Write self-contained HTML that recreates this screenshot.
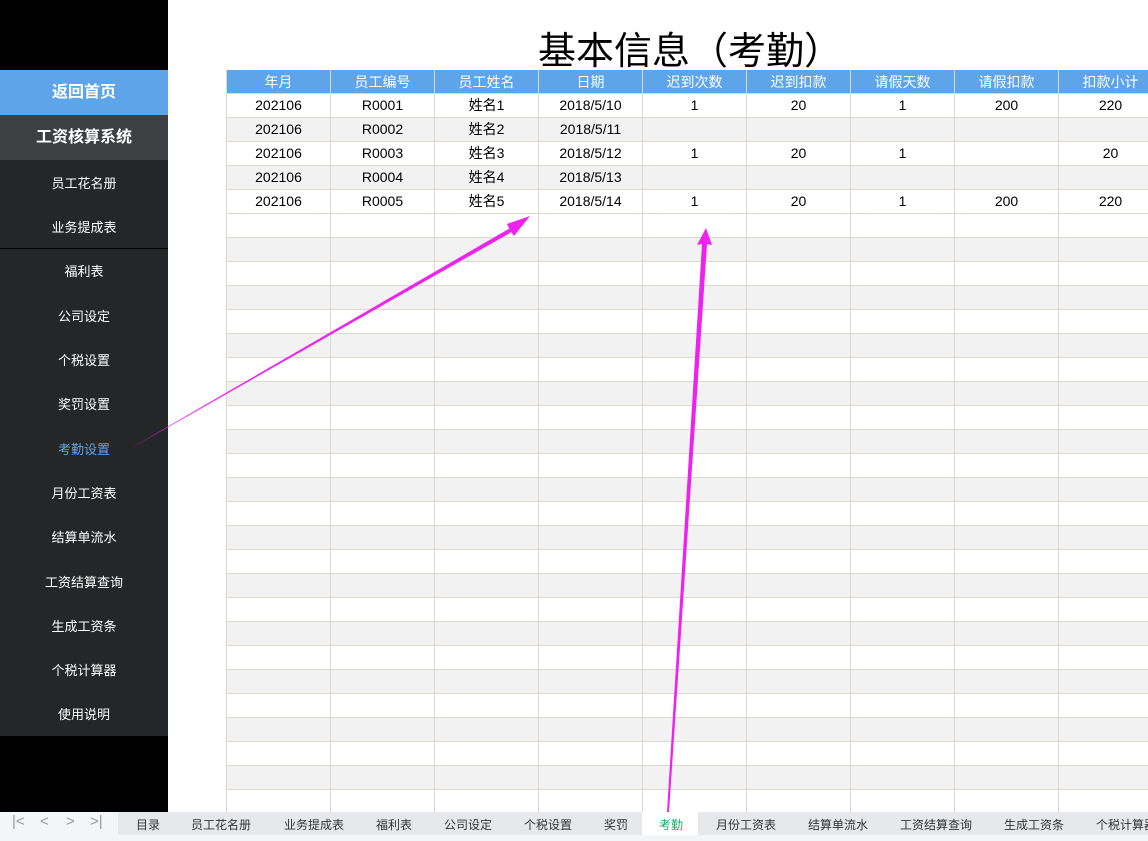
<!DOCTYPE html><html><head><meta charset="utf-8"><style>
body{margin:0;width:1148px;height:841px;overflow:hidden;background:#fff;font-family:"Liberation Sans","Noto Sans CJK SC",sans-serif;position:relative}
#side{position:absolute;left:0;top:0;width:168px;height:812px;background:#000}
.it{position:absolute;left:0;width:168px;text-align:center;color:#fff;font-size:13px}
table{position:absolute;left:226px;top:70px;border-collapse:collapse;table-layout:fixed;width:937px}
col{width:104px}
td{height:23px;border:1px solid #dcd9cc;text-align:center;font-size:14px;padding:0;color:#000;line-height:23px;white-space:nowrap;overflow:hidden}
th{height:23px;background:#5ea4e8;color:#fff;font-weight:normal;font-size:14px;border:1px solid #dcd9cc;border-top:none;padding:0;white-space:nowrap;overflow:hidden}
tr:nth-child(odd) td{background:#f2f2f2}
#title{position:absolute;left:460px;width:460px;top:20px;text-align:center;font-size:38px;color:#000}
#bar{position:absolute;left:0;top:812px;width:1148px;height:23px;background:#e6e8ec;font-size:12px;color:#333;overflow:hidden}
#bar span{position:absolute;top:4px;white-space:nowrap}
#bot{position:absolute;left:0;top:835px;width:1148px;height:6px;background:#f4f5f7}
</style></head><body>
<div id="side">
<div style="position:absolute;top:70px;left:0;width:168px;height:45px;background:#5ea4e8;color:#fff;font-weight:bold;font-size:16px;line-height:45px;text-align:center">返回首页</div>
<div style="position:absolute;top:115px;left:0;width:168px;height:45px;background:#3d3f40;color:#fff;font-weight:bold;font-size:16px;line-height:45px;text-align:center">工资核算系统</div>
<div style="position:absolute;top:160px;left:0;width:168px;height:576px;background:#252627"></div>
<div style="position:absolute;top:248px;left:0;width:168px;height:1px;background:#000"></div>
<div class="it" style="top:173px">员工花名册</div>
<div class="it" style="top:217px">业务提成表</div>
<div class="it" style="top:261px">福利表</div>
<div class="it" style="top:306px">公司设定</div>
<div class="it" style="top:350px">个税设置</div>
<div class="it" style="top:394px">奖罚设置</div>
<div class="it" style="top:439px;color:#5ea4e8">考勤设置</div>
<div class="it" style="top:483px">月份工资表</div>
<div class="it" style="top:527px">结算单流水</div>
<div class="it" style="top:572px">工资结算查询</div>
<div class="it" style="top:616px">生成工资条</div>
<div class="it" style="top:660px">个税计算器</div>
<div class="it" style="top:704px">使用说明</div>
</div>
<div id="title">基本信息（考勤）</div>
<table>
<colgroup><col><col><col><col><col><col><col><col><col></colgroup>
<tr><th>年月</th><th>员工编号</th><th>员工姓名</th><th>日期</th><th>迟到次数</th><th>迟到扣款</th><th>请假天数</th><th>请假扣款</th><th>扣款小计</th></tr>
<tr><td>202106</td><td>R0001</td><td>姓名1</td><td>2018/5/10</td><td>1</td><td>20</td><td>1</td><td>200</td><td>220</td></tr>
<tr><td>202106</td><td>R0002</td><td>姓名2</td><td>2018/5/11</td><td></td><td></td><td></td><td></td><td></td></tr>
<tr><td>202106</td><td>R0003</td><td>姓名3</td><td>2018/5/12</td><td>1</td><td>20</td><td>1</td><td></td><td>20</td></tr>
<tr><td>202106</td><td>R0004</td><td>姓名4</td><td>2018/5/13</td><td></td><td></td><td></td><td></td><td></td></tr>
<tr><td>202106</td><td>R0005</td><td>姓名5</td><td>2018/5/14</td><td>1</td><td>20</td><td>1</td><td>200</td><td>220</td></tr>
<script>for(var i=0;i<25;i++)document.write('<tr><td></td><td></td><td></td><td></td><td></td><td></td><td></td><td></td><td></td></tr>');</script>
</table>
<div id="bar">
<div style="position:absolute;left:0;top:0;width:118px;height:23px;background:#f4f5f7;color:#999;font-size:15px"><span style="left:12px;top:1px">|&lt;</span><span style="left:40px;top:1px">&lt;</span><span style="left:66px;top:1px">&gt;</span><span style="left:90px;top:1px">&gt;|</span></div>
<span style="left:136px">目录</span><span style="left:191px">员工花名册</span><span style="left:284px">业务提成表</span><span style="left:376px">福利表</span><span style="left:444px">公司设定</span><span style="left:524px">个税设置</span><span style="left:604px">奖罚</span>
<div style="position:absolute;left:642px;top:0;width:56px;height:23px;background:#fff"></div><span style="left:659px;color:#1aab6c">考勤</span>
<span style="left:716px">月份工资表</span><span style="left:808px">结算单流水</span><span style="left:900px">工资结算查询</span><span style="left:1004px">生成工资条</span><span style="left:1096px">个税计算器</span>
</div>
<div id="bot"></div>
<svg style="position:absolute;left:0;top:0" width="1148" height="841">
<polygon points="130,449 510,230 507,224 530,216 514,236 511,232" fill="#ee22ee"/>
<polygon points="129,449 512,227 510,233" fill="#ee22ee"/>
<polygon points="667,812 702,244 697,245 706,228 712,245 707,244 669,812" fill="#ee22ee"/>
</svg>
</body></html>
